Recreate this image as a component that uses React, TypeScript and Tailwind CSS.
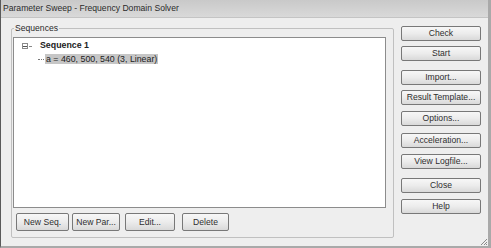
import React from "react";

const font = { fontFamily: '"Liberation Sans", Arial, sans-serif' };

function Btn({ label, className = "" }: { label: string; className?: string }) {
  return (
    <div
      className={`flex items-center justify-center border border-[#787878] rounded-[2px] bg-gradient-to-b from-[#f7f7f7] via-[#ececec] to-[#d9d9d9] text-[#2e2e2e] text-[8.6px] leading-none ${className}`}
    >
      {label}
    </div>
  );
}

export default function App() {
  return (
    <div
      style={font}
      className="relative w-[491px] h-[248px] flex flex-col bg-[#eeeeee] border-l border-l-[#5a5a5a] border-r-[3px] border-r-[#a9a9a9] border-b-2 border-b-[#a9a9a9] overflow-hidden"
    >
      {/* title bar */}
      <div className="h-[18px] flex items-center pl-[2px] bg-gradient-to-b from-[#c9c9c9] to-[#d9d9d9] border-b border-b-[#c4c4c4] text-[8.6px] text-[#2a2a2a]">
        Parameter Sweep - Frequency Domain Solver
      </div>

      <div className="flex">
        {/* group box */}
        <div className="relative ml-[10px] mt-[10px] w-[383px] h-[210px] border border-[#c0c0c0] rounded-[2px] pl-[1px] pt-[8px]">
          <span className="absolute left-[2px] top-[-6px] px-[1px] bg-[#eeeeee] text-[8.6px] leading-[10px] text-[#2a2a2a]">
            Sequences
          </span>

          {/* tree list */}
          <div className="w-[373px] h-[171px] bg-white border border-[#8c8c8c] text-[8.8px] text-[#222] pt-[3px]">
            <div className="flex items-center h-[10px]">
              <div className="ml-[8px] w-[6px] h-[6px] border border-[#8a8a8a] flex items-center justify-center">
                <div className="w-[4px] h-px bg-[#555]" />
              </div>
              <div className="ml-[1px] w-[3px] h-px bg-[#888]" />
              <span className="ml-[8px] font-bold">Sequence 1</span>
            </div>
            <div className="flex items-center h-[10px] mt-[3px]">
              <div className="ml-[24px] w-[6px] border-t border-dotted border-[#777]" />
              <span className="ml-[1px] bg-[#c6c6c6] px-[1px] leading-[10px]">
                a = 460, 500, 540 (3, Linear)
              </span>
            </div>
          </div>

          <div className="flex mt-[5px]">
            <Btn label="New Seq." className="ml-[3px] w-[53px] h-[18px]" />
            <Btn label="New Par..." className="ml-[3px] w-[48px] h-[18px]" />
            <Btn label="Edit..." className="ml-[5px] w-[50px] h-[18px]" />
            <Btn label="Delete" className="ml-[7px] w-[47px] h-[18px]" />
          </div>
        </div>

        {/* right buttons */}
        <div className="ml-[7px] mt-[8px] flex flex-col w-[80px]">
          <Btn label="Check" className="h-[15px]" />
          <Btn label="Start" className="h-[15px] mt-[5px]" />
          <Btn label="Import..." className="h-[15px] mt-[9px]" />
          <Btn label="Result Template..." className="h-[15px] mt-[5px]" />
          <Btn label="Options..." className="h-[15px] mt-[6px]" />
          <Btn label="Acceleration..." className="h-[15px] mt-[7px]" />
          <Btn label="View Logfile..." className="h-[15px] mt-[6px]" />
          <Btn label="Close" className="h-[15px] mt-[9px]" />
          <Btn label="Help" className="h-[15px] mt-[6px]" />
        </div>
      </div>

      {/* resize grip */}
      <svg className="absolute right-0 bottom-0" width="8" height="8" viewBox="0 0 8 8">
        <path d="M7 1 L1 7 M7 4 L4 7 M7 6 L6 7" stroke="#8a8a8a" strokeWidth="1" />
      </svg>
    </div>
  );
}
